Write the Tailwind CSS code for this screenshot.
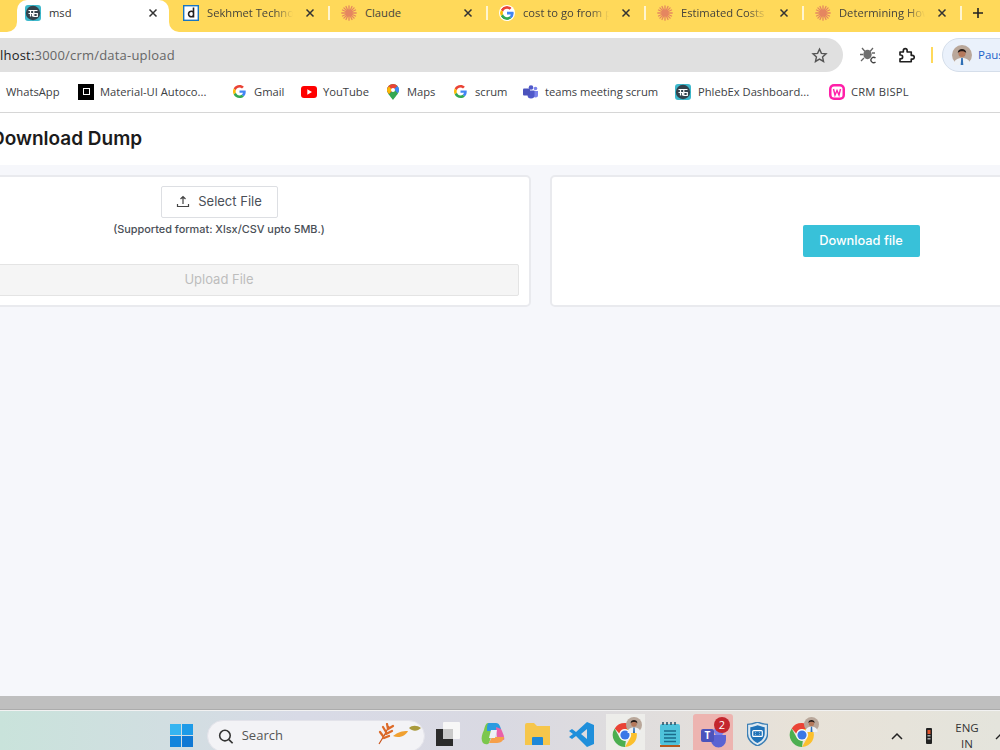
<!doctype html>
<html><head><meta charset="utf-8"><script src="https://cdn.jsdelivr.net/npm/@tailwindcss/browser@4"></script></head>
<body class="m-0 overflow-hidden">
<svg width="0" height="0" class="absolute">
<defs>
<symbol id="g" viewBox="0 0 48 48"><path fill="#EA4335" d="M24 9.500c3.500 0 6.700 1.200 9.200 3.600l6.900-6.900C35.900 2.400 30.500 0 24 0 14.600 0 6.500 5.400 2.600 13.200l8 6.200C12.500 13.600 17.800 9.500 24 9.500z"/><path fill="#4285F4" d="M47 24.500c0-1.600-.1-3.100-.4-4.500H24v9h12.900c-.6 3-2.200 5.500-4.800 7.200l7.700 6C44.300 37.900 47 31.800 47 24.500z"/><path fill="#FBBC05" d="M10.500 28.600c-.5-1.400-.8-3-.8-4.600s.3-3.200.8-4.600l-8-6.200C.9 16.500 0 20.100 0 24s.9 7.500 2.600 10.800l7.900-6.200z"/><path fill="#34A853" d="M24 48c6.500 0 11.900-2.100 15.900-5.800l-7.700-6c-2.100 1.400-4.900 2.300-8.100 2.300-6.200 0-11.500-4.200-13.400-9.900l-8 6.200C6.500 42.600 14.600 48 24 48z"/></symbol>
<symbol id="burst" viewBox="0 0 16 16"><circle cx="8" cy="8" r="3.500" fill="#E58660"/><g stroke="#E58660" stroke-width="1.300" stroke-linecap="round"><path d="M8 .8v14.400M.8 8h14.400M2.900 2.900l10.200 10.200M13.100 2.900L2.900 13.100M5 1.500l6 13M11 1.500l-6 13M1.500 5l13 6M1.500 11l13-6"/></g></symbol>
<symbol id="phleb" viewBox="0 0 16 16"><rect width="16" height="16" rx="3" fill="#3DB8CC"/><circle cx="8" cy="8" r="7.200" fill="#33424C"/><path d="M3.500 5.500h9M5.500 5.500v6M3.500 8.500h4v3M8.800 5.500v6h3.500v-3h-3.500" fill="none" stroke="#fff" stroke-width="1.200"/></symbol>
<symbol id="chrome" viewBox="0 0 48 48"><path fill="#EA4335" d="M24 2a22 22 0 0 1 19 11H24a11 11 0 0 0-10.500 8L5 12A22 22 0 0 1 24 2z"/><path fill="#FBC02D" d="M43 13a22 22 0 0 1-19 33l9.500-16.500A11 11 0 0 0 33 17l-9-4z"/><path fill="#4CAF50" d="M5 12l9.500 17.500a11 11 0 0 0 11 5L24 46A22 22 0 0 1 5 12z"/><circle cx="24" cy="24" r="10.500" fill="#fff"/><circle cx="24" cy="24" r="8.500" fill="#3B78E7"/></symbol>
<symbol id="face" viewBox="0 0 20 20"><circle cx="10" cy="10" r="10" fill="#B9A79A"/><path d="M2 20c0-5 3-7 8-7s8 2 8 7z" fill="#EDF1F6"/><path d="M9.200 13h1.600l.5 7H8.700z" fill="#2F6FB5"/><circle cx="10" cy="8.500" r="3.600" fill="#B5795C"/><path d="M5.800 8C5.500 2.500 14.500 2.500 14.200 8 12.500 5.800 7.500 5.800 5.800 8z" fill="#241A17"/></symbol>
</defs>
</svg>
<div class="w-[1000px] h-[750px] overflow-hidden flex flex-col font-['Open_Sans',sans-serif] bg-white">

<!-- tab strip -->
<div class="h-8 shrink-0 bg-[#FFD95A] flex items-stretch text-[11.200px] text-[#45433c]">
  <div class="w-[17px] shrink-0 bg-white"><div class="h-full bg-[#FFD95A] rounded-br-[10px]"></div></div>
  <div class="w-[152px] shrink-0 h-8 bg-white rounded-t-[10px] flex items-center pl-2 pb-[6px]">
    <svg class="w-4 h-4 shrink-0"><use href="#phleb"/></svg>
    <span class="ml-2 w-[86px] text-[#333]">msd</span>
    <svg class="w-[12px] h-[12px] ml-[12px]" viewBox="0 0 12 12"><path d="M2.500 2.500l7 7M9.500 2.500l-7 7" stroke="#333" stroke-width="1.500"/></svg>
  </div>
  <div class="flex-1 bg-white"><div class="h-full bg-[#FFD95A] rounded-bl-[10px] flex items-stretch pl-[2px]">
    <div class="w-[158px] shrink-0 flex items-center pl-3 pb-[6px] relative">
      <svg class="w-4 h-4 shrink-0" viewBox="0 0 16 16"><rect x=".7" y=".7" width="14.600" height="14.600" fill="#fff" stroke="#1976C2" stroke-width="1.400"/><path d="M10.500 2.500v10M10.500 7.500a2.700 2.700 0 1 0 0 3" fill="none" stroke="#222" stroke-width="1.600"/></svg>
      <span class="ml-2 w-[86px] overflow-hidden whitespace-nowrap [mask-image:linear-gradient(90deg,#000_78%,transparent)]">Sekhmet Technologies</span>
      <svg class="w-[12px] h-[12px] ml-[11px]" viewBox="0 0 12 12"><path d="M2.500 2.500l7 7M9.500 2.500l-7 7" stroke="#333" stroke-width="1.500"/></svg>
      <span class="absolute -right-[1px] top-[6px] w-[2px] h-[14px] bg-[#FFF5CF]"></span>
    </div>
    <div class="w-[158px] shrink-0 flex items-center pl-3 pb-[6px] relative">
      <svg class="w-4 h-4 shrink-0"><use href="#burst"/></svg>
      <span class="ml-2 w-[86px] overflow-hidden whitespace-nowrap">Claude</span>
      <svg class="w-[12px] h-[12px] ml-[11px]" viewBox="0 0 12 12"><path d="M2.500 2.500l7 7M9.500 2.500l-7 7" stroke="#333" stroke-width="1.500"/></svg>
      <span class="absolute -right-[1px] top-[6px] w-[2px] h-[14px] bg-[#FFF5CF]"></span>
    </div>
    <div class="w-[158px] shrink-0 flex items-center pl-3 pb-[6px] relative">
      <svg class="w-4 h-4 shrink-0 bg-white rounded-full p-[1px]"><use href="#g"/></svg>
      <span class="ml-2 w-[86px] overflow-hidden whitespace-nowrap [mask-image:linear-gradient(90deg,#000_78%,transparent)]">cost to go from pune</span>
      <svg class="w-[12px] h-[12px] ml-[11px]" viewBox="0 0 12 12"><path d="M2.500 2.500l7 7M9.500 2.500l-7 7" stroke="#333" stroke-width="1.500"/></svg>
      <span class="absolute -right-[1px] top-[6px] w-[2px] h-[14px] bg-[#FFF5CF]"></span>
    </div>
    <div class="w-[158px] shrink-0 flex items-center pl-3 pb-[6px] relative">
      <svg class="w-4 h-4 shrink-0"><use href="#burst"/></svg>
      <span class="ml-2 w-[86px] overflow-hidden whitespace-nowrap [mask-image:linear-gradient(90deg,#000_78%,transparent)]">Estimated Costs for</span>
      <svg class="w-[12px] h-[12px] ml-[11px]" viewBox="0 0 12 12"><path d="M2.500 2.500l7 7M9.500 2.500l-7 7" stroke="#333" stroke-width="1.500"/></svg>
      <span class="absolute -right-[1px] top-[6px] w-[2px] h-[14px] bg-[#FFF5CF]"></span>
    </div>
    <div class="w-[158px] shrink-0 flex items-center pl-3 pb-[6px] relative">
      <svg class="w-4 h-4 shrink-0"><use href="#burst"/></svg>
      <span class="ml-2 w-[86px] overflow-hidden whitespace-nowrap [mask-image:linear-gradient(90deg,#000_78%,transparent)]">Determining How</span>
      <svg class="w-[12px] h-[12px] ml-[11px]" viewBox="0 0 12 12"><path d="M2.500 2.500l7 7M9.500 2.500l-7 7" stroke="#333" stroke-width="1.500"/></svg>
      <span class="absolute -right-[1px] top-[6px] w-[2px] h-[14px] bg-[#FFF5CF]"></span>
    </div>
    <svg class="w-[12px] h-[12px] ml-[11px] mt-[7px] shrink-0" viewBox="0 0 12 12"><path d="M6 1v10M1 6h10" stroke="#222" stroke-width="1.600"/></svg>
  </div></div>
</div>

<!-- toolbar -->
<div class="h-10 shrink-0 bg-white flex items-end">
  <div class="w-[843px] shrink-0 h-[34px] bg-[#E0E0E0] rounded-r-[17px] flex items-center justify-between pr-[15px] text-[13px] text-[#666] tracking-[.2px]">
    <span class="pt-[1px]"><span class="text-[#222]">lhost:</span>3000/crm/data-upload</span>
    <svg class="w-[17px] h-[17px]" viewBox="0 0 24 24"><path d="M12 3l2.700 6 6.500.7-4.900 4.300 1.400 6.400L12 17l-5.700 3.400 1.400-6.400L2.800 9.700 9.300 9z" fill="none" stroke="#555" stroke-width="2"/></svg>
  </div>
  <div class="flex items-center h-[34px] shrink-0">
    <svg class="w-[18px] h-[18px] ml-4 shrink-0" viewBox="0 0 18 18"><g stroke="#666" stroke-width="1.300" fill="none"><path d="M3 2l3 3.500M14 2l-3 3.500M1 8.500h3M2 15l3-3M16 7h-3"/></g><ellipse cx="8.500" cy="8.500" rx="4.200" ry="4.700" fill="#6f6f6f"/><path d="M16.500 12a2.700 2.700 0 1 0 0 4" fill="none" stroke="#444" stroke-width="1.400"/></svg>
    <svg class="w-[18px] h-[18px] ml-[20px] shrink-0" viewBox="0 0 24 24"><path d="M4 8h4.500V6a2.500 2.500 0 0 1 5 0v2H19v4.500h1.500a2.500 2.500 0 0 1 0 5H19V21H4v-4h1a2.300 2.300 0 0 0 0-5H4z" fill="none" stroke="#1f1f1f" stroke-width="2.200" stroke-linejoin="round"/></svg>
    <span class="w-[2px] h-[16px] bg-[#FFD95A] ml-[16px] shrink-0"></span>
    <div class="ml-[9px] w-[70px] shrink-0 h-[34px] rounded-l-[17px] bg-[#EAF1FB] border border-[#D5DEEA] flex items-center pl-[9px] text-[11.500px] text-[#1A62C9] whitespace-nowrap">
      <svg class="w-5 h-5 shrink-0"><use href="#face"/></svg>
      <span class="ml-[6px]">Pausam</span>
    </div>
  </div>
</div>

<!-- bookmarks -->
<div class="h-[41px] shrink-0 bg-white border-b border-[#D6D6D6] flex items-center text-[11.200px] text-[#3c4043] whitespace-nowrap">
  <div class="w-[78px] pl-[6px]">WhatsApp</div>
  <div class="w-[155px] flex items-center gap-[6px]"><span class="w-4 h-4 bg-black flex items-center justify-center"><span class="w-[7px] h-[7px] border border-white"></span></span>Material-UI Autoco...</div>
  <div class="w-[68px] flex items-center gap-[8px]"><svg class="w-[13px] h-[13px]"><use href="#g"/></svg>Gmail</div>
  <div class="w-[86px] flex items-center gap-[6px]"><svg class="w-4 h-[12px]" viewBox="0 0 16 12"><rect width="16" height="12" rx="3" fill="#FF0000"/><path d="M6.300 3.300v5.400L11 6z" fill="#fff"/></svg>YouTube</div>
  <div class="w-[67px] flex items-center gap-[8px]"><svg class="w-[12px] h-4" viewBox="0 0 12 16"><path d="M6 0a6 6 0 0 1 6 6c0 3-3 6-6 10C3 12 0 9 0 6a6 6 0 0 1 6-6z" fill="#34A853"/><path d="M6 0a6 6 0 0 1 4.500 2L2 10C1 8.500 0 7.300 0 6a6 6 0 0 1 6-6z" fill="#EA4335"/><path d="M10.500 2A6 6 0 0 1 12 6c0 1-.5 2.200-1.300 3.300L7 5z" fill="#4285F4"/><path d="M2 2.200A6 6 0 0 0 0 6c0 1.300 1 2.500 2 4l3-4z" fill="#FBBC05"/><circle cx="6" cy="6" r="2" fill="#fff"/></svg>Maps</div>
  <div class="w-[69px] flex items-center gap-[8px]"><svg class="w-[13px] h-[13px]"><use href="#g"/></svg>scrum</div>
  <div class="w-[152px] flex items-center gap-[7px]"><svg class="w-[15px] h-[14px]" viewBox="0 0 15 14"><circle cx="12.500" cy="3.500" r="1.800" fill="#7B83EB"/><path d="M10 6h5v4a2.500 2.500 0 0 1-5 0z" fill="#7B83EB"/><circle cx="8" cy="2.500" r="2.300" fill="#5059C9"/><path d="M4.500 5.500h7V10a3.500 3.500 0 0 1-7 0z" fill="#5059C9"/><rect y="3.500" width="7" height="7" rx="1" fill="#4B53BC"/></svg>teams meeting scrum</div>
  <div class="w-[154px] flex items-center gap-[7px]"><svg class="w-4 h-4"><use href="#phleb"/></svg>PhlebEx Dashboard...</div>
  <div class="flex items-center gap-[6px] tracking-[.2px]"><svg class="w-4 h-4" viewBox="0 0 16 16"><rect width="16" height="16" rx="5" fill="#FF1FA8"/><rect x="2.500" y="2.500" width="11" height="11" rx="2.500" fill="#fff"/><path d="M4.500 5l1.500 6 2-4.500 2 4.500 1.500-6" fill="none" stroke="#FF1FA8" stroke-width="1.400"/></svg>CRM BISPL</div>
</div>

<!-- page header -->
<div class="h-[52px] shrink-0 bg-white flex items-center -ml-[9px] pt-[1px] font-['Inter',sans-serif] text-[19px] font-semibold text-[#1b1b1b]">Download Dump</div>

<!-- content -->
<div class="flex-1 min-h-0 bg-[#F6F7FB] pt-[10px] font-['Inter',sans-serif]">
  <div class="flex gap-[19px] -ml-[92px] w-[1263px]">
    <div class="w-[623px] shrink-0 h-[132px] bg-white border-2 border-[#E9EAEE] rounded-[5px] flex flex-col items-center pl-[9px] pr-[10px] pt-[9px]">
      <button class="w-[117px] h-[32px] bg-white border border-[#DDDFE3] rounded-[2px] flex items-center justify-center gap-[8px] text-[13px] text-[#4a4f57]">
        <svg class="w-[14px] h-[14px]" viewBox="0 0 14 14"><path d="M7 9V1.500M4.500 4L7 1.500 9.500 4M1.500 9v2.500h11V9" fill="none" stroke="#444" stroke-width="1.200"/></svg>Select File
      </button>
      <p class="mt-[4px] text-[10.900px] leading-[14px] font-medium text-[#4a4f57]">(Supported format: Xlsx/CSV upto 5MB.)</p>
      <button disabled class="mt-[28px] w-full h-[32px] bg-[#F5F5F5] border border-[#E4E4E4] rounded-[2px] text-[13px] text-[#BDBDBD]">Upload File</button>
    </div>
    <div class="w-[622px] shrink-0 h-[132px] bg-white border-2 border-[#E9EAEE] rounded-[5px] flex items-center justify-center">
      <button class="w-[117px] h-[32px] bg-[#38C1D9] rounded-[2px] text-[12.800px] font-medium text-white">Download file</button>
    </div>
  </div>
</div>

<!-- horizontal scrollbar -->
<div class="h-[14px] shrink-0 bg-[#BFBFBF] border-b border-[#ACACAC]"></div>
<div class="h-[1px] shrink-0 bg-[#F2F2F2]"></div>

<!-- taskbar -->
<div class="h-[39px] shrink-0 bg-[linear-gradient(90deg,#C9E3DB_0%,#D8DAE6_30%,#D9D9E2_50%,#E8E2D8_80%,#E4E4DC_100%)] flex items-start text-[#333] whitespace-nowrap">
  <svg class="w-[23px] h-[23px] ml-[170px] mt-[13px] shrink-0" viewBox="0 0 23 23"><path d="M0 0h11v11H0z" fill="#35B5F1"/><path d="M12 0h11v11H12z" fill="#1D9BE8"/><path d="M0 12h11v11H0z" fill="#1285DC"/><path d="M12 12h11v11H12z" fill="#0F78D4"/></svg>
  <div class="ml-[14px] mt-[9px] w-[218px] h-[32px] shrink-0 rounded-full bg-[#F3F3F6] border border-[#E3E3EA] flex items-center pl-[10px] text-[13px] text-[#555]">
    <svg class="w-[17px] h-[17px]" viewBox="0 0 17 17"><circle cx="7.500" cy="7.500" r="5.700" fill="none" stroke="#333" stroke-width="1.700"/><path d="M11.800 11.800l4 4" stroke="#333" stroke-width="1.800"/></svg>
    <span class="ml-[8px] w-[50px]">Search</span>
    <svg class="w-[46px] h-[22px] ml-[90px] shrink-0 mb-[4px]" viewBox="0 0 46 22"><path d="M1 21C5 15 8 10 11 3" stroke="#C9551E" stroke-width="1.200" fill="none"/><path d="M5 13L2 9M8 9L5 4M10 6L9 1M6 15l5-2M8 11l6-3M10 6l5-3" stroke="#DD6A28" stroke-width="2.200" stroke-linecap="round"/><path d="M15 13c5-4 9-5 15-5-2 4-8 8-15 5z" fill="#F0A030"/><path d="M31 5c3-3 8-3 12 0-3 3-8 4-12 0z" fill="#A99A3C"/></svg>
  </div>
  <svg class="w-[25px] h-[24px] ml-[11px] mt-[11px] shrink-0" viewBox="0 0 25 24"><rect x="7" y="0" width="17" height="17" rx="1" fill="#F7F7F7"/><rect x="0" y="7" width="17" height="17" fill="#2B2B2B"/><rect x="7" y="7" width="10" height="10" fill="#C9C9C9"/></svg>
  <svg class="w-[24px] h-[24px] ml-[20px] mt-[11px] shrink-0" viewBox="0 0 24 24"><path d="M7 1h7l-3 11-3 9c-1 2-6 2-7-2-1-3 0-7 2-11 1-4 2-7 4-7z" fill="#7BC74D"/><path d="M8 1h7c3 0 4 3 5 6l-9 2H6c0-4 0-8 2-8z" fill="#2A9BE0"/><path d="M15 5l5 2c2 4 4 9 3 11l-7-3z" fill="#E960A8"/><path d="M11 15h12c0 3-3 6-7 6H8z" fill="#F6A04A"/><path d="M10 8h6l-2 8H8z" fill="#EEF1F6"/></svg>
  <svg class="w-[25px] h-[22px] ml-[20px] mt-[12px] shrink-0" viewBox="0 0 25 22"><path d="M0 2a2 2 0 0 1 2-2h7l3 3h13v19H0z" fill="#F6C64B"/><path d="M8 14h9a1 1 0 0 1 1 1v7H7v-7a1 1 0 0 1 1-1z" fill="#1E88D8"/></svg>
  <svg class="w-[25px] h-[25px] ml-[19px] mt-[11px] shrink-0" viewBox="0 0 25 25"><path d="M18 0l7 3v19l-7 3L7 14l-4 3-3-2 4-3-4-3 3-2 4 3z M18 7l-6 5 6 5z" fill="#1F8FDB" fill-rule="evenodd"/></svg>
  <div class="ml-[12px] mt-[3px] w-[39px] h-[40px] shrink-0 bg-[#EDEDEA] relative">
    <svg class="absolute left-[6px] top-[8px] w-[26px] h-[26px]"><use href="#chrome"/></svg>
    <svg class="absolute left-[20px] top-[3px] w-4 h-4"><use href="#face"/></svg>
  </div>
  <svg class="w-[20px] h-[25px] ml-[15px] mt-[11px] shrink-0" viewBox="0 0 20 25"><rect y="2" width="20" height="21" rx="2" fill="#4FC3DC"/><path d="M4 9h12M4 12.500h12M4 16h12M4 19.500h12" stroke="#1B6B8B" stroke-width="1.400"/><path d="M3 0v3M7 0v3M11 0v3M15 0v3" stroke="#264E63" stroke-width="1.500"/><rect y="23" width="20" height="2" fill="#B5591E"/></svg>
  <div class="ml-[13px] mt-[3px] w-[40px] h-[40px] shrink-0 bg-[#EDB4B0] rounded-t-[3px] relative">
    <svg class="absolute left-[8px] top-[11px] w-[25px] h-[23px]" viewBox="0 0 25 23"><circle cx="18" cy="6" r="5" fill="#7B83EB"/><path d="M10 10h15v5a7 7 0 0 1-15 0z" fill="#5B63D3"/><rect y="4" width="13" height="13" rx="2" fill="#4B53BC"/><text x="6.500" y="14" font-size="10" font-weight="700" text-anchor="middle" fill="#fff" font-family="Open Sans">T</text></svg>
    <span class="absolute left-[21px] top-[3px] w-[16px] h-[16px] rounded-full bg-[#C4262E] text-white text-[11px] leading-[16px] text-center">2</span>
  </div>
  <svg class="w-[21px] h-[24px] ml-[14px] mt-[11px] shrink-0" viewBox="0 0 21 25"><path d="M10.500 0C14 1.500 17 2.500 21 2.500V12c0 6-4 10-10.500 13C4 22 0 18 0 12V2.500C4 2.500 7 1.500 10.500 0z" fill="#DDE8F0" stroke="#3C7FB5" stroke-width="1.500"/><path d="M10.500 3.500c3 1 5 1.700 7.500 2V12c0 4.500-3 7.500-7.500 10C6 19.500 3 16.500 3 12V5.500c2.500-.3 4.500-1 7.500-2z" fill="#1F72B8"/><rect x="5.500" y="9" width="10" height="6" rx="1" fill="none" stroke="#fff" stroke-width="1.200"/><path d="M8 11h.5M12.500 11h.5M8 13h.5M12.500 13h.5" stroke="#fff"/></svg>
  <div class="ml-[21px] mt-[3px] w-[30px] h-[36px] shrink-0 relative">
    <svg class="absolute left-0 top-[8px] w-[26px] h-[26px]"><use href="#chrome"/></svg>
    <svg class="absolute left-[15px] top-[3px] w-[15px] h-[15px]"><use href="#face"/></svg>
  </div>
  <svg class="w-[12px] h-[8px] ml-[72px] mt-[21px] shrink-0" viewBox="0 0 12 8"><path d="M1 7l5-5 5 5" fill="none" stroke="#222" stroke-width="1.500"/></svg>
  <svg class="w-[6px] h-[16px] ml-[23px] mt-[17px] shrink-0" viewBox="0 0 6 16"><rect width="6" height="16" rx="1" fill="#222"/><rect x="1.500" y="2" width="3" height="4" fill="#E2542B"/><rect x="1.500" y="7" width="3" height="1.500" fill="#aaa"/><rect x="1.500" y="10" width="3" height="1.500" fill="#aaa"/></svg>
  <div class="ml-[22px] mt-[9px] w-[26px] shrink-0 text-[11.500px] leading-[16px] text-center text-[#333]">ENG<br>IN</div>
  <svg class="w-[8px] h-[8px] ml-[15px] mt-[21px] shrink-0" viewBox="0 0 8 8"><path d="M1 7l5-5 5 5" fill="none" stroke="#222" stroke-width="1.400"/></svg>
</div>
</div>
</body></html>
